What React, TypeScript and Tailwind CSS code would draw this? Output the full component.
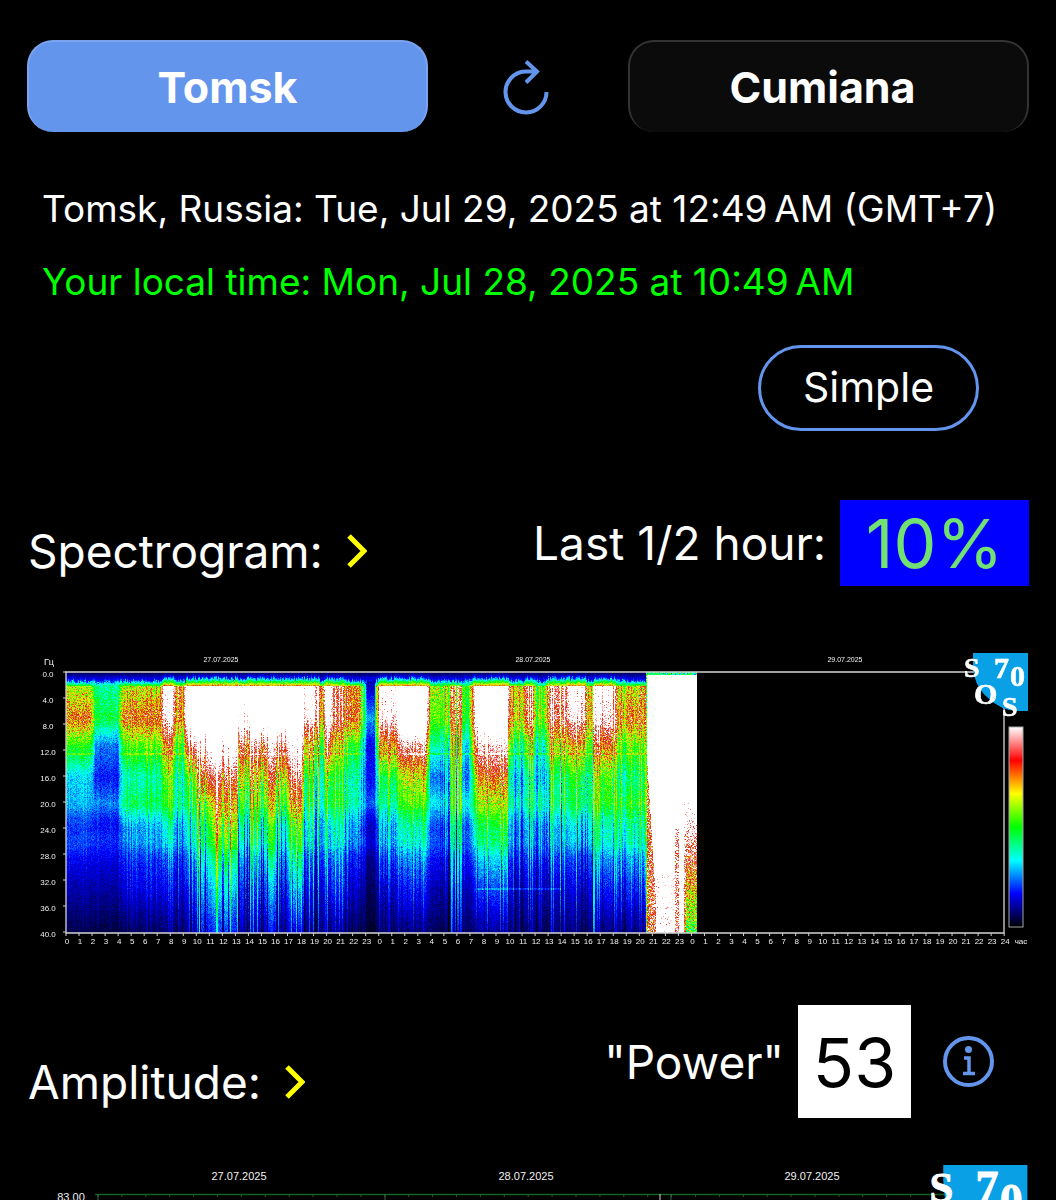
import { useEffect, useRef } from "react";

const FREQS = [2.2, 7, 11, 16, 20, 24, 28, 33, 40];

type Segment = { from: number; streak: number; levels: number[] };

const SEGMENTS: Segment[] = [
  { from: 0, streak: 0.3, levels: [7.4, 9.4, 6.3, 3.8, 3.1, 2.3, 2, 1.4, 0.6] },
  { from: 2.1, streak: 0.3, levels: [4.8, 5.6, 3, 2.2, 2.6, 2, 1.8, 1.3, 0.5] },
  { from: 4.2, streak: 0.5, levels: [7.6, 9.6, 6.6, 4.6, 4.9, 3.1, 2.4, 1.8, 0.7] },
  { from: 7.4, streak: 0.6, levels: [14, 13, 9.6, 7, 6, 4.3, 3, 2.1, 1] },
  { from: 8.3, streak: 1, levels: [9.5, 9.4, 6.3, 4.7, 4.5, 3.2, 2.4, 1.8, 0.8] },
  { from: 9.2, streak: 1.2, levels: [16, 16, 11, 6.3, 5, 3.9, 2.9, 2.1, 1.1] },
  { from: 10.1, streak: 2, levels: [18, 18, 13.5, 10.3, 7, 5.6, 4.4, 3.2, 2] },
  { from: 11.3, streak: 1.8, levels: [18, 18, 15, 11, 8.8, 7.4, 5.5, 4, 2.3] },
  { from: 13.1, streak: 1.8, levels: [16, 15, 11, 8.2, 6.1, 4.6, 3.3, 2.4, 1.4] },
  { from: 14.2, streak: 1.8, levels: [18, 17, 11.5, 8.2, 6.4, 5, 3.6, 2.5, 1.4] },
  { from: 15.5, streak: 1.5, levels: [18, 17, 12.8, 10.4, 8.4, 6.4, 5.2, 3.5, 2] },
  { from: 16.1, streak: 1.6, levels: [18, 17, 12, 8.2, 6, 4.2, 3.2, 2.3, 1.3] },
  { from: 17.2, streak: 1.2, levels: [18, 18, 14, 11.6, 9, 6.4, 5, 3.6, 1.8] },
  { from: 18.2, streak: 1.8, levels: [13.8, 12.8, 8.6, 5.8, 4.8, 3.8, 2.8, 2, 1] },
  { from: 19.5, streak: 0.8, levels: [8.6, 7.6, 4.8, 3.9, 3.4, 2.8, 2.2, 1.6, 0.9] },
  { from: 19.9, streak: 1, levels: [16, 15, 12, 7.6, 6, 4.6, 3.6, 2.5, 1.4] },
  { from: 20.4, streak: 1.2, levels: [10.6, 10.4, 7.6, 5.4, 5.1, 3.9, 2.9, 2.2, 1] },
  { from: 21.5, streak: 0.8, levels: [9.4, 10, 6.3, 4.9, 4.4, 3.2, 2.4, 1.7, 0.8] },
  { from: 22.7, streak: 0.4, levels: [5.6, 5.6, 4, 3, 2.9, 2.2, 1.8, 1.2, 0.5] },
  { from: 23, streak: 0.2, levels: [1.4, 3.2, 1.9, 2, 2.2, 1.3, 1.1, 0.7, 0.3] },
  { from: 23.9, streak: 0.8, levels: [14, 12.8, 9.4, 5.9, 4.7, 3.5, 2.7, 1.8, 0.9] },
  { from: 25.6, streak: 0.8, levels: [17, 17, 12, 8.2, 6.3, 4.7, 3.4, 2.3, 1] },
  { from: 27.8, streak: 0.7, levels: [7.2, 6.8, 4.8, 2.9, 3.5, 2.4, 2.1, 1.4, 0.7] },
  { from: 29.3, streak: 1.8, levels: [9, 8.6, 6.6, 5.1, 4.8, 3.5, 2.6, 1.8, 0.9] },
  { from: 30.4, streak: 0.6, levels: [5.8, 5.6, 3.6, 2.6, 3.5, 2.4, 2, 1.4, 0.7] },
  { from: 31.1, streak: 0.7, levels: [11, 10.6, 8.4, 5.8, 4.9, 3.7, 2.7, 1.8, 0.9] },
  { from: 31.5, streak: 1, levels: [17, 16, 12.5, 9.6, 7.2, 5.5, 4, 2.6, 1.2] },
  { from: 34, streak: 1.2, levels: [8.4, 8.2, 5.3, 3.5, 3.8, 2.7, 2.2, 1.5, 0.8] },
  { from: 35.2, streak: 1.2, levels: [10.8, 10.6, 7.1, 4.9, 4.5, 3.3, 2.5, 1.7, 0.9] },
  { from: 36, streak: 0.9, levels: [6.2, 6.6, 4.3, 3.4, 4.1, 2.8, 2.3, 1.6, 0.8] },
  { from: 36.9, streak: 1.6, levels: [11.2, 10.8, 7.8, 5.2, 4.6, 3.3, 2.5, 1.7, 0.9] },
  { from: 38.6, streak: 1.3, levels: [14, 12.8, 9.2, 6.2, 5.4, 3.9, 2.7, 1.9, 1] },
  { from: 40, streak: 1.2, levels: [7.6, 8.2, 6.2, 4.7, 4.8, 3.7, 2.6, 1.8, 0.9] },
  { from: 40.5, streak: 1.2, levels: [13.4, 12.4, 9.6, 6.6, 5.8, 4.4, 3.3, 2.2, 1] },
  { from: 42.2, streak: 0.9, levels: [8, 9.4, 6.8, 5.2, 5.6, 4.6, 3.4, 2.3, 1] },
  { from: 44.2, streak: 0.6, levels: [9, 9.6, 7, 6, 6, 5, 3.6, 2.4, 1.1] },
];

const STOPS = [
  [0, 0, 0],
  [0, 0, 255],
  [0, 255, 255],
  [0, 255, 0],
  [255, 255, 0],
  [255, 0, 0],
  [255, 255, 255],
];

const HOURS = 48.45;
const HOUR_W = 13.03;
const LEFT = 66;
const PLOT_W = 631;
const PLOT_H = 261;

function randomSource(seed: number) {
  let s = seed;
  return () => {
    s = (s + 0x6d2b79f5) | 0;
    let t = Math.imul(s ^ (s >>> 15), 1 | s);
    t = (t + Math.imul(t ^ (t >>> 7), 61 | t)) ^ t;
    return ((t ^ (t >>> 14)) >>> 0) / 4294967296;
  };
}

function colourOf(level: number) {
  const v = Math.max(0, Math.min(11.999, level)) / 2;
  const i = Math.floor(v);
  const k = v - i;
  const rgb = STOPS[i].map((c, n) => c + (STOPS[i + 1][n] - c) * k);
  return level > 7.5 && level < 11 ? [rgb[0] * 0.88, rgb[1] * 0.8 + 34, rgb[2] + 8] : rgb;
}

function profile(levels: number[], f: number) {
  if (f <= FREQS[0]) return levels[0];
  for (let i = 1; i < FREQS.length; i++) {
    if (f <= FREQS[i]) {
      const k = (f - FREQS[i - 1]) / (FREQS[i] - FREQS[i - 1]);
      return levels[i - 1] + (levels[i] - levels[i - 1]) * k;
    }
  }
  return levels[levels.length - 1];
}

function segmentAt(h: number) {
  let found = SEGMENTS[0];
  for (const s of SEGMENTS) if (h >= s.from) found = s;
  return found;
}

function stormLevel(h: number, f: number, noise: number) {
  if (h < 44.6) return 6.5 + noise * 3;
  if (h < 45.3) return f > 14 + (h - 44.6) * 32 ? 10 + (h - 44.6) * 2 + noise * 4 : 17;
  if (h > 47.4) return f < 20 ? 17 : 14 - (f - 20) * (h > 47.6 ? 0.4 : 0.25) + noise * 4;
  if (h > 46.75 && h < 47 && f > 24) return 11.5 + noise * 4;
  return f > 31 ? 14 + noise * 4 : 17;
}

function Spectrum() {
  const ref = useRef<HTMLCanvasElement>(null);
  useEffect(() => {
    const ctx = ref.current?.getContext("2d");
    if (!ctx) return;
    const rand = randomSource(27);
    const image = ctx.createImageData(PLOT_W, PLOT_H);
    for (let x = 0; x < PLOT_W; x++) {
      const h = (x / PLOT_W) * HOURS;
      const seg = segmentAt(h);
      const near = [segmentAt(h - 0.1), seg, segmentAt(h + 0.1), segmentAt(h + 0.2)];
      const r = rand();
      const spike = r > 0.82 ? 1.6 : r < 0.16 ? -1.2 : (r - 0.5) * 0.8;
      const column = spike * seg.streak;
      const thin = Math.abs(h - 29.55) < 0.05 || Math.abs(h - 40.5) < 0.05;
      const strong = seg.levels[0] > 10;
      const onset = (strong ? 0.5 : 0.9) + rand() * 0.6;
      for (let y = 0; y < PLOT_H; y++) {
        const f = (y / PLOT_H) * 40;
        const noise = (rand() + rand() + rand()) / 1.5 - 1;
        let v: number;
        if (h > 44.5) {
          v = f < 0.4 ? 5 + noise * 4 : stormLevel(h, f, noise);
        } else {
          const base = near.reduce((sum, s) => sum + profile(s.levels, f), 0) / near.length;
          const resonance = 0.4 * Math.exp(-((f - 20) ** 2) / 3) + 0.4 * Math.exp(-((f - 26) ** 2) / 3);
          const scale = f > 16 ? Math.min(1, base / 7 + 0.3) : Math.min(1, base / 5);
          v = base + resonance + column * scale;
          v += noise * (base > 7 ? 2.7 : base > 5 ? 1.5 : 0.3 + base * 0.2);
          if (Math.abs(f - 12.5) < 0.2 && base > 3) v += 1.1;
          if (Math.abs(f - 33.2) < 0.1 && h > 31.5 && h < 38) v += 0.8;
          if (thin) v += 2.2;
          if (f < onset) v = 0.6 + (f / onset) * 1.6 + noise * 0.4;
          else if (f < 2.1) {
            const rise = (f - onset) / (2.1 - onset);
            v = Math.min(v, 2.4 + rise * Math.min(7, base * 0.55) + noise * 1.4);
          }
        }
        const [red, green, blue] = colourOf(v);
        const at = (y * PLOT_W + x) * 4;
        image.data[at] = red;
        image.data[at + 1] = green;
        image.data[at + 2] = blue;
        image.data[at + 3] = 255;
      }
    }
    ctx.putImageData(image, 0, 0);
  }, []);
  return <canvas ref={ref} width={PLOT_W} height={PLOT_H} className="block h-full w-full" />;
}

function Logo({ x, y, size }: { x: number; y: number; size: number }) {
  return (
    <svg x={x} y={y} width={size} height={size} viewBox="0 0 66 66" fontFamily="Liberation Serif, serif" fontWeight="700" fill="#fff" stroke="#fff" strokeWidth="0.6">
      <path d="M8 0H63V58H53Q36 58 22 44Q8 32 8 10Z" fill="#0aa0e6" stroke="none" />
      <text x="-1" y="24" fontSize="28">S</text>
      <text x="9" y="51" fontSize="30">O</text>
      <text x="37" y="63" fontSize="28">S</text>
      <text x="29" y="25" fontSize="30">7</text>
      <text x="45" y="33" fontSize="30">0</text>
    </svg>
  );
}

function SpectrogramChart() {
  return (
    <svg viewBox="0 0 1056 312" className="block w-full" role="img" aria-label="Spectrogram" fontFamily="Liberation Sans, sans-serif" fill="#f0f0f0">
      <defs>
        <linearGradient id="scale" x1="0" y1="0" x2="0" y2="1">
          <stop offset="0" stopColor="#fff" />
          <stop offset="0.167" stopColor="#f00" />
          <stop offset="0.333" stopColor="#ff0" />
          <stop offset="0.5" stopColor="#0f0" />
          <stop offset="0.667" stopColor="#0ff" />
          <stop offset="0.833" stopColor="#00f" />
          <stop offset="1" stopColor="#000" />
        </linearGradient>
      </defs>
      <foreignObject x={LEFT} y="32" width={PLOT_W} height={PLOT_H}>
        <Spectrum />
      </foreignObject>
      <path d="M65 32H1004V293H66V32" fill="none" stroke="#d4d4d4" strokeWidth="1.3" />
      <g fontSize="8" textAnchor="middle">
        <g fontSize="7">
          <text x="221" y="22">27.07.2025</text>
          <text x="533" y="22">28.07.2025</text>
          <text x="845" y="22">29.07.2025</text>
        </g>
        <text x="49" y="25" fontSize="9">Гц</text>
        {Array.from({ length: 11 }, (_, i) => (
          <g key={i}>
            <text x="48" y={37 + i * 26}>{(i * 4).toFixed(1)}</text>
            <path d={`M63 ${32 + i * 26}h3`} stroke="#d4d4d4" />
          </g>
        ))}
        {Array.from({ length: 73 }, (_, i) => (
          <g key={i}>
            <text x={LEFT + 1 + i * HOUR_W} y="304">{i === 72 ? 24 : i % 24}</text>
            <path d={`M${LEFT + i * HOUR_W} 293v3`} stroke="#d4d4d4" />
          </g>
        ))}
        <text x="1021" y="304">час</text>
      </g>
      <rect x="1009" y="87" width="14" height="200" fill="url(#scale)" stroke="#a3a3a3" />
      <Logo x={965} y={13} size={66} />
    </svg>
  );
}

function AmplitudeChart() {
  return (
    <svg viewBox="0 0 1056 50" className="block w-full" role="img" aria-label="Amplitude" fontFamily="Liberation Sans, sans-serif" fill="#f0f0f0">
      <g fontSize="11" textAnchor="middle">
        <text x="239" y="30">27.07.2025</text>
        <text x="526" y="30">28.07.2025</text>
        <text x="812" y="30">29.07.2025</text>
        <text x="71" y="51">83.00</text>
      </g>
      <path d="M95 44.500H945" stroke="#176020" strokeWidth="1.500" />
      {Array.from({ length: 36 }, (_, i) => (
        <path key={i} d={`M${98 + i * 23.900} 44v3`} stroke="#176020" />
      ))}
      <path d="M98 44v6M385 44v6M671 44v6" stroke="#3f6b44" />
      <path d="M660 44v6" stroke="#d4d4d4" />
      <Logo x={931} y={15} size={101} />
    </svg>
  );
}

function Chevron() {
  return (
    <svg viewBox="0 0 22 34" className="h-[34px] w-[22px] shrink-0" fill="none" stroke="#ffff00" strokeWidth="5" aria-hidden="true">
      <path d="M4 2L19 17L4 32" />
    </svg>
  );
}

export default function App() {
  return (
    <main className="min-h-screen bg-black font-['Inter',sans-serif] text-white">
      <header className="grid grid-cols-[1fr_200px_1fr] items-center px-[27px] pt-10">
        <button className="h-[92px] rounded-[26px] border-2 border-b-0 border-[#7aa4f0] bg-[#6495ed] text-[43px] font-bold">Tomsk</button>
        <div className="flex justify-center">
          <button aria-label="Refresh">
            <svg viewBox="0 0 50 58" className="h-[58px] w-[50px]" fill="none" stroke="#6495ed" strokeWidth="4">
              <path d="M22 14.500A20.500 20.500 0 1 0 43.500 35" />
              <path d="M22 14.500H34M23 4.500L34 14.500L23 25.500" />
            </svg>
          </button>
        </div>
        <button className="h-[92px] rounded-[26px] border-2 border-b-0 border-[#333333] bg-[#0b0b0b] pr-3 text-[43px] font-bold">Cumiana</button>
      </header>

      <section className="flex flex-col gap-6 pt-[52px] pl-[42px] text-[37px] leading-[49px] whitespace-nowrap">
        <p>Tomsk, Russia: Tue, Jul 29, 2025 at 12:49{"\u202f"}AM (GMT+7)</p>
        <p className="text-[#00ff00]">Your local time: Mon, Jul 28, 2025 at 10:49{"\u202f"}AM</p>
      </section>

      <div className="flex justify-end pt-[39px] pr-[77px]">
        <button className="h-[86px] w-[221px] rounded-full border-3 border-[#6495ed] text-[41px]">Simple</button>
      </div>

      <section className="pt-[69px]">
        <div className="flex items-center justify-between pr-[27px] pl-7">
          <h2 className="flex items-center gap-[22px] pt-4 text-[46px] leading-[56px]">
            Spectrogram: <Chevron />
          </h2>
          <p className="flex items-center gap-[14px] text-[46px] leading-[56px]">
            Last 1/2 hour:
            <span className="flex h-[86px] w-[189px] items-center justify-center bg-[#0000ff] text-[68px] text-[#71e271]">10%</span>
          </p>
        </div>
        <div className="pt-[54px]">
          <SpectrogramChart />
        </div>
      </section>

      <section className="pt-[53px]">
        <div className="flex items-center justify-between pr-[62px] pl-7">
          <h2 className="flex items-center gap-[22px] pt-10 text-[46px] leading-[56px]">
            Amplitude: <Chevron />
          </h2>
          <div className="flex items-center text-[46px] leading-[56px]">
            "Power"
            <span className="ml-[14px] flex size-[113px] items-center justify-center bg-white text-[68px] text-black">53</span>
            <button aria-label="About power" className="ml-8">
              <svg viewBox="0 0 51 51" className="size-[51px]" fill="none" stroke="#6495ed">
                <circle cx="25.500" cy="25.500" r="23.500" strokeWidth="4" />
                <circle cx="25.500" cy="13.500" r="3.500" fill="#6495ed" stroke="none" />
                <path d="M21 22H26V37M20 37.500H32" strokeWidth="3.500" />
              </svg>
            </button>
          </div>
        </div>
        <div className="pt-8">
          <AmplitudeChart />
        </div>
      </section>
    </main>
  );
}
